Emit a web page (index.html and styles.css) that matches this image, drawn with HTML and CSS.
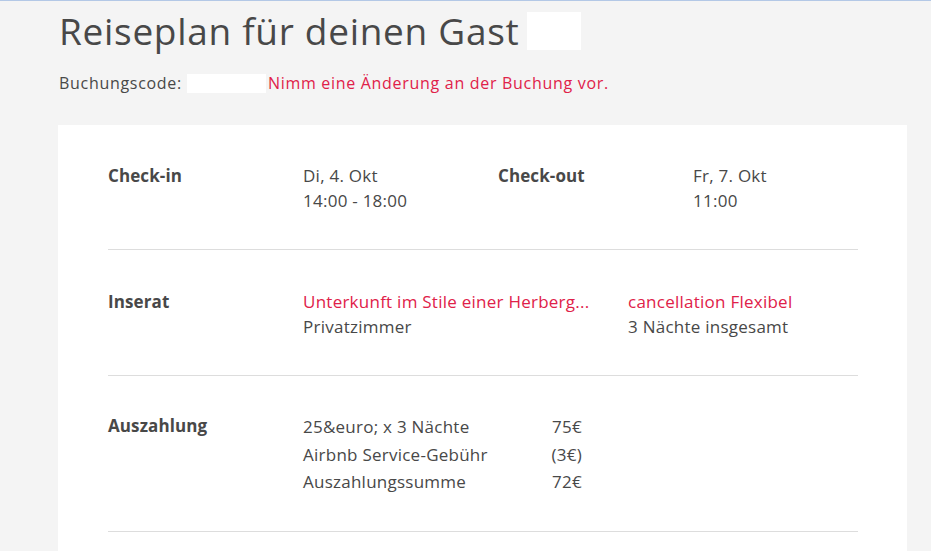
FILE: index.html
```html
<!DOCTYPE html>
<html lang="de">
<head>
<meta charset="utf-8">
<title>Reiseplan für deinen Gast</title>
<link rel="stylesheet" href="styles.css">
</head>
<body>
<div class="page">
  <h1 class="title">Reiseplan für deinen Gast <span class="blank blank-name"></span></h1>
  <p class="code">Buchungscode: <span class="blank blank-code"></span><a class="link" href="#">Nimm eine Änderung an der Buchung vor.</a></p>
  <section class="card">
    <div class="row row-dates">
      <div class="label">Check-in</div>
      <div class="value">Di, 4. Okt<br>14:00 - 18:00</div>
      <div class="label">Check-out</div>
      <div class="value">Fr, 7. Okt<br>11:00</div>
    </div>
    <div class="row row-listing">
      <div class="label">Inserat</div>
      <div class="value"><a class="link" href="#">Unterkunft im Stile einer Herberg...</a><br>Privatzimmer</div>
      <div class="value"><a class="link" href="#">cancellation Flexibel</a><br>3 Nächte insgesamt</div>
    </div>
    <div class="row row-payout">
      <div class="label">Auszahlung</div>
      <table class="payout">
        <tr><td>25&amp;euro; x 3 Nächte</td><td class="amt">75€</td></tr>
        <tr><td>Airbnb Service-Gebühr</td><td class="amt">(3€)</td></tr>
        <tr><td>Auszahlungssumme</td><td class="amt">72€</td></tr>
      </table>
    </div>
  </section>
</div>
</body>
</html>
```
FILE: styles.css
```css
html, body {
  margin: 0;
  padding: 0;
}
body {
  background: #f4f4f4;
  border-top: 1px solid #b3c8e6;
  color: #484848;
  font-family: "Open Sans", "Liberation Sans", sans-serif;
  height: 550px;
  overflow: hidden;
}
.page {
  padding: 0 24px 0 58px;
}
.title {
  margin: 0;
  padding: 6px 0 0 1px;
  font-size: 37px;
  letter-spacing: 0.7px;
  font-weight: 400;
  line-height: 48px;
  display: flex;
  align-items: center;
  gap: 8px;
}
.blank {
  display: inline-block;
  background: #ffffff;
}
.blank-name {
  width: 54px;
  height: 38px;
}
.code {
  margin: 17px 0 0 1px;
  font-size: 16px;
  letter-spacing: 0.7px;
  line-height: 22px;
  display: flex;
  align-items: center;
}
.blank-code {
  width: 79px;
  height: 19px;
  margin: 0 2px 0 5px;
}
.link {
  color: #e02149;
  text-decoration: none;
}
.card {
  margin-top: 31px;
  background: #ffffff;
  padding: 0 49px 0 50px;
  height: 500px;
}
.row {
  display: grid;
  border-bottom: 1px solid #dddddd;
  font-size: 17px;
  letter-spacing: 0.25px;
  line-height: 25px;
  padding: 38px 0 36px;
}
.row-dates {
  grid-template-columns: 195px 195px 195px 1fr;
}
.row-listing {
  grid-template-columns: 195px 325px 1fr;
  padding-top: 39px;
}
.row-payout {
  grid-template-columns: 195px 1fr;
  padding-top: 37px;
  padding-bottom: 35px;
}
.label {
  font-weight: 700;
  letter-spacing: 0.1px;
}
.payout {
  justify-self: start;
  width: 279px;
  border-collapse: collapse;
  font-size: 17px;
}
.payout td {
  padding: 0;
  height: 27.5px;
  vertical-align: middle;
}
.payout .amt {
  text-align: right;
}
```
